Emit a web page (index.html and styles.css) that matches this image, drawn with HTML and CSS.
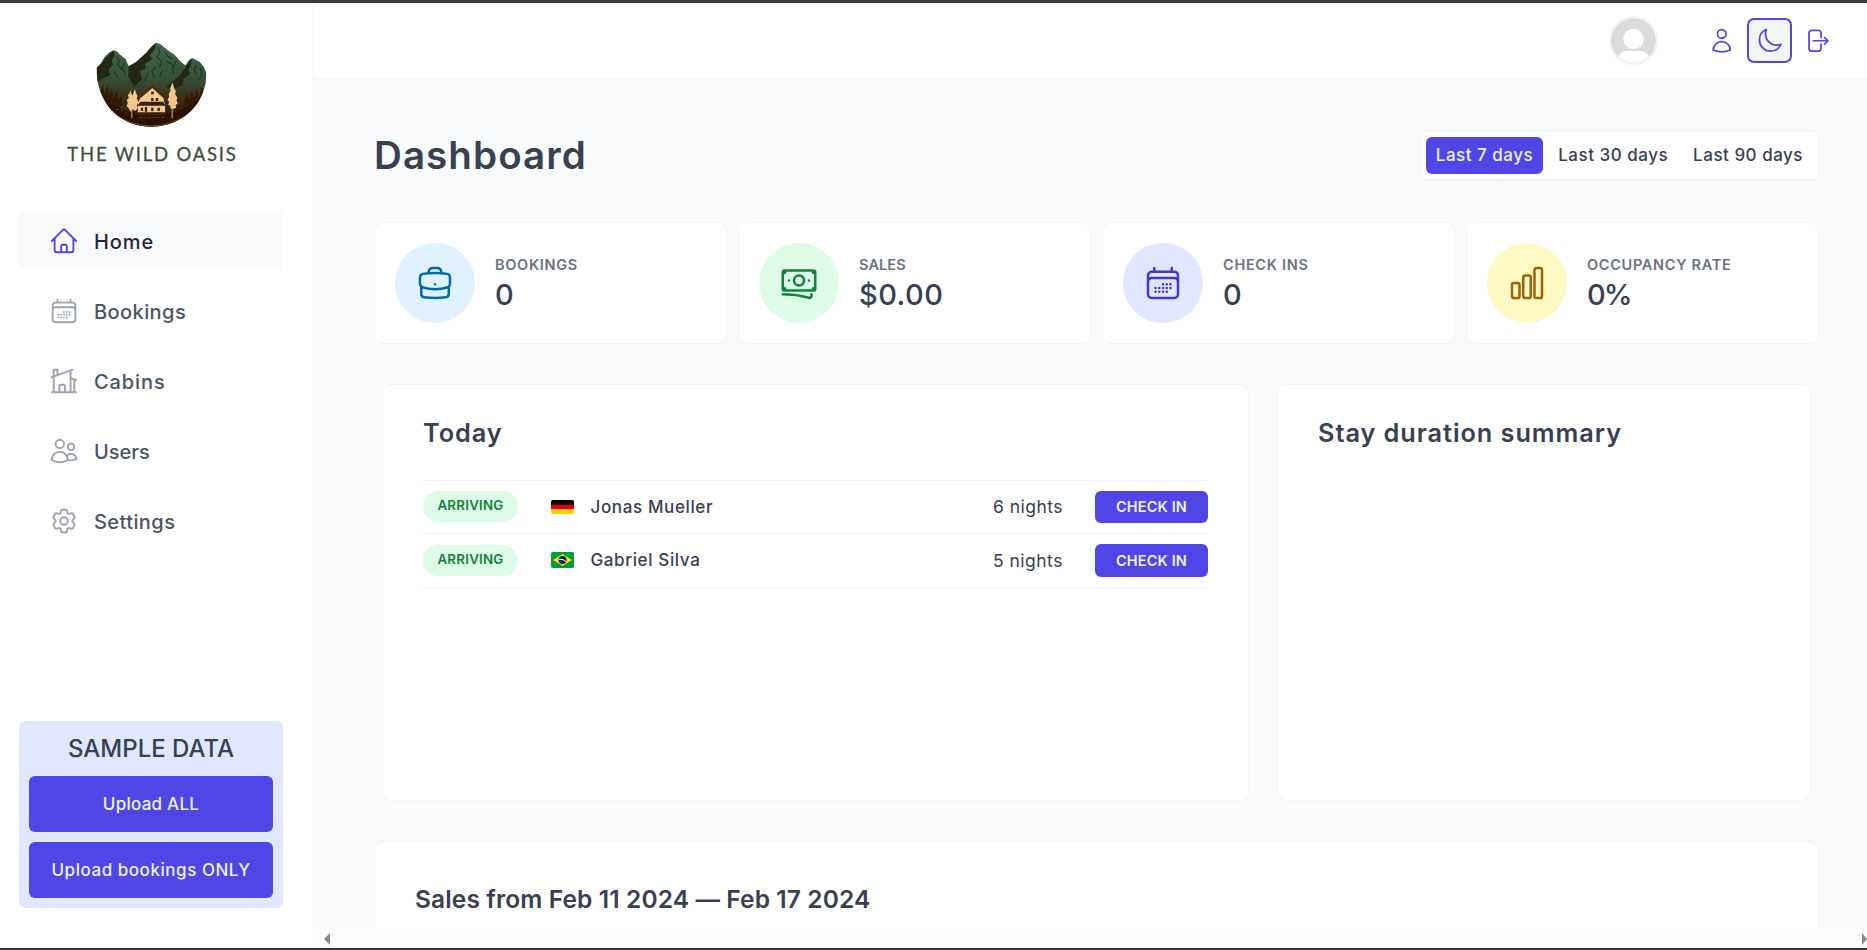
FILE: index.html
```html
<!DOCTYPE html>
<html lang="en">
<head>
<meta charset="utf-8">
<title>The Wild Oasis</title>
<link rel="stylesheet" href="styles.css">
</head>
<body>
<div class="app">
  <aside class="sidebar">
    <div class="logo">
      <svg class="logo-mark" viewBox="290 127 332 255">
        <defs>
          <linearGradient id="land" x1="0" y1="0" x2="0" y2="1">
            <stop offset="0" stop-color="#3f664c"/>
            <stop offset=".42" stop-color="#35503a"/>
            <stop offset=".66" stop-color="#3a3018"/>
            <stop offset="1" stop-color="#241003"/>
          </linearGradient>
          <clipPath id="bowl"><path d="M291 205 305 190 315 172 330 158 342 152 352 155 362 165 378 178 388 200 410 187 440 160 458 138 470 129 482 133 505 152 525 165 548 190 558 197 568 182 578 175 588 180 600 186 612 200 621 220C621 310 550 381 456 381 360 381 291 310 291 205Z"/></clipPath>
        </defs>
        <g clip-path="url(#bowl)">
          <rect x="290" y="127" width="332" height="255" fill="url(#land)"/>
          <path fill="#232813" d="M291 205 342 152 346 166 337 180 340 196 326 210 333 226 312 236 291 250ZM388 200 470 129 466 150 450 166 458 178 436 192 440 206 420 214 428 238 404 262 386 230ZM500 262 540 228 578 175 574 196 566 212 572 222 552 238 548 258 520 268Z"/>
          <path fill="none" stroke="#232813" stroke-width="3" d="M352 170l8 14-6 12 12 14M376 186l-8 20 10 16M474 142l8 16-10 14 14 12-6 18M496 156l8 14 14 6M500 186l16 6 8 14M470 200l-14 14 8 18M530 186l-12 24 6 14M488 214l-8 16M590 196l-6 16 8 14M604 204l2 24-12 16M344 214l8 18M444 222l-8 22"/>
          <path fill="#331703" d="M291 230l10 46 8-22 6 28 8-26 6 30 8-22 6 32 8-24 6 30 10-18v110H291ZM621 236l-8 48-6-24-8 30-8-26-6 30-8-22-6 30-8-20-10 26v74h68Z" opacity=".85"/>
          <path fill="#2a1203" d="M330 312Q390 345 456 347T600 300V382H300Z"/>
          <path fill="none" stroke="#8f5d30" stroke-width="2" d="M350 330q18-4 36 16M362 322q18 2 24 10M420 353h75" stroke-dasharray="9 4"/>
          <path fill="none" stroke="#7a4a2c" stroke-width="3" d="M340 340Q395 379 456 379T575 338"/>
        </g>
        <path fill="#f4c98c" d="M415 344V310L420 300V292L459 260 493 292V304L497 312V344Z"/>
        <path fill="#3a1c08" d="M413 318l10-12h68l8 12ZM415 338h83v7h-83ZM455 276h8v8h-8ZM455 295h7v9h-7ZM469 295h7v9h-7ZM424 324h7v10h-7ZM436 322h7v14h-7ZM455 324h7v10h-7ZM474 324h7v10h-7Z"/>
        <path fill="none" stroke="#4c280d" stroke-width="6" d="M415 298 459 261 495 294"/>
        <path fill="#f3c78c" d="M392 270l4 12 3 6 7-20 4 12 4 8-2 8 5 12-5 8 3 10-8 8-8-6-6 8-6-12-6-4 4-10-3-8 6-8-3-8 6-6ZM519 248l5 18 5 8-2 10 7 10-3 8 4 10-7 4 2 8-9 4-8-2-1-8-6-2 3-10-5-6 5-8-1-10 5-8-1-8Z"/>
        <path stroke="#e7b577" stroke-width="3" d="M397 325v30M518 325v30"/>
      </svg>
      <span class="logo-text">THE WILD OASIS</span>
    </div>
    <nav class="nav">
      <a class="nav-item active"><svg class="icon" viewBox="0 0 24 24"><path d="M2.25 12l8.954-8.955c.44-.439 1.152-.439 1.591 0L21.75 12M4.5 9.75v10.125c0 .621.504 1.125 1.125 1.125H9.75v-4.875c0-.621.504-1.125 1.125-1.125h2.25c.621 0 1.125.504 1.125 1.125V21h4.125c.621 0 1.125-.504 1.125-1.125V9.75M8.25 21h8.25"/></svg><span>Home</span></a>
      <a class="nav-item"><svg class="icon" viewBox="0 0 24 24"><path id="calendar" d="M6.75 3v2.25M17.25 3v2.25M3 18.75V7.5a2.25 2.25 0 012.25-2.25h13.5A2.25 2.25 0 0121 7.5v11.25m-18 0A2.25 2.25 0 005.25 21h13.5A2.25 2.25 0 0021 18.75m-18 0v-7.5A2.25 2.25 0 015.25 9h13.5A2.25 2.25 0 0121 11.25v7.5m-9-6h.008v.008H12v-.008zM12 15h.008v.008H12V15zm0 2.25h.008v.008H12v-.008zM9.75 15h.008v.008H9.75V15zm0 2.25h.008v.008H9.75v-.008zM7.5 15h.008v.008H7.5V15zm0 2.25h.008v.008H7.5v-.008zm6.75-4.5h.008v.008h-.008v-.008zm0 2.25h.008v.008h-.008V15zm0 2.25h.008v.008h-.008v-.008zm2.25-4.5h.008v.008H16.5v-.008zm0 2.25h.008v.008H16.5V15z"/></svg><span class="bookings">Bookings</span></a>
      <a class="nav-item"><svg class="icon" viewBox="0 0 24 24"><path d="M8.25 21v-4.875c0-.621.504-1.125 1.125-1.125h2.25c.621 0 1.125.504 1.125 1.125V21m0 0h4.5V3.545M12.75 21h7.5V10.75M2.25 21h1.5m18 0h-18M2.25 9l4.5-1.636M18.75 3l-1.5.545m0 6.205l3 1m1.5.5l-1.500-.5M6.75 7.364V3h-3v18m3-13.636l10.5-3.819"/></svg><span class="cabins">Cabins</span></a>
      <a class="nav-item"><svg class="icon" viewBox="0 0 24 24"><path d="M15 19.128a9.38 9.38 0 002.625.372 9.337 9.337 0 004.121-.952 4.125 4.125 0 00-7.533-2.493M15 19.128v-.003c0-1.113-.285-2.16-.786-3.07M15 19.128v.106A12.318 12.318 0 018.624 21c-2.331 0-4.512-.645-6.374-1.766l-.001-.109a6.375 6.375 0 0111.964-3.07M12 6.375a3.375 3.375 0 11-6.75 0 3.375 3.375 0 016.75 0zm8.25 2.25a2.625 2.625 0 11-5.25 0 2.625 2.625 0 015.25 0z"/></svg><span class="users">Users</span></a>
      <a class="nav-item"><svg class="icon" viewBox="0 0 24 24"><path d="M9.594 3.94c.09-.542.56-.94 1.11-.94h2.593c.55 0 1.02.398 1.11.94l.213 1.281c.063.374.313.686.645.87.074.04.147.083.22.127.324.196.72.257 1.075.124l1.217-.456a1.125 1.125 0 011.37.49l1.296 2.247a1.125 1.125 0 01-.26 1.431l-1.003.827c-.293.24-.438.613-.431.992a6.759 6.759 0 010 .255c-.007.378.138.75.43.99l1.005.828c.424.35.534.954.26 1.43l-1.298 2.247a1.125 1.125 0 01-1.369.491l-1.217-.456c-.355-.133-.75-.072-1.076.124a6.57 6.57 0 01-.22.128c-.331.183-.581.495-.644.869l-.213 1.28c-.09.543-.56.941-1.11.941h-2.594c-.55 0-1.02-.398-1.11-.94l-.213-1.281c-.062-.374-.312-.686-.644-.87a6.52 6.52 0 01-.22-.127c-.325-.196-.72-.257-1.076-.124l-1.217.456a1.125 1.125 0 01-1.369-.49l-1.297-2.247a1.125 1.125 0 01.26-1.431l1.004-.827c.292-.24.437-.613.43-.992a6.932 6.932 0 010-.255c.007-.378-.138-.75-.43-.99l-1.004-.828a1.125 1.125 0 01-.26-1.43l1.297-2.247a1.125 1.125 0 011.37-.491l1.216.456c.356.133.751.072 1.076-.124.072-.044.146-.087.22-.128.332-.183.582-.495.644-.869l.214-1.281zM15 12a3 3 0 11-6 0 3 3 0 016 0z"/></svg><span class="bookings">Settings</span></a>
    </nav>
    <section class="sample">
      <h3>SAMPLE DATA</h3>
      <button class="upload all">Upload ALL</button>
      <button class="upload">Upload bookings ONLY</button>
    </section>
  </aside>
  <div class="page">
    <header class="topbar">
      <svg class="avatar" viewBox="0 0 49 49"><circle cx="24.5" cy="24.5" r="24.5" fill="#f3f4f6"/><circle cx="24.5" cy="24.5" r="22.3" fill="#dbdbdb"/><circle cx="24.5" cy="23" r="10.2" fill="#fff"/><path fill="#fff" d="M9 40.2Q12 35 18 35H31Q37 35 40 40.2A22 22 0 0 1 9 40.2Z"/></svg>
      <div class="actions">
        <button class="tool"><svg class="icon" viewBox="0 0 24 24"><path d="M15.75 6a3.75 3.75 0 11-7.5 0 3.75 3.75 0 017.5 0zM4.501 20.118a7.5 7.5 0 0114.998 0A17.933 17.933 0 0112 21.75c-2.676 0-5.216-.584-7.499-1.632z"/></svg></button>
        <button class="tool focused"><svg class="icon" viewBox="0 0 24 24"><path d="M21.752 15.002A9.718 9.718 0 0118 15.75c-5.385 0-9.75-4.365-9.75-9.75 0-1.33.266-2.597.748-3.752A9.753 9.753 0 003 11.25C3 16.635 7.365 21 12.75 21a9.753 9.753 0 009.002-5.998z"/></svg></button>
        <button class="tool"><svg class="icon" viewBox="0 0 24 24"><path d="M15.75 9V5.25A2.25 2.25 0 0013.5 3h-6a2.25 2.25 0 00-2.25 2.25v13.5A2.25 2.25 0 007.5 21h6a2.25 2.25 0 002.25-2.25V15m3 0l3-3m0 0l-3-3m3 3H9"/></svg></button>
      </div>
    </header>
    <main class="content">
      <div class="heading">
        <h1>Dashboard</h1>
        <div class="filter">
          <button class="range selected">Last 7 days</button>
          <button class="range">Last 30 days</button>
          <button class="range">Last 90 days</button>
        </div>
      </div>
      <div class="stats">
        <div class="stat"><div class="disc blue"><svg class="icon" viewBox="0 0 24 24"><path d="M20.25 14.15v4.25c0 1.094-.787 2.036-1.872 2.18-2.087.277-4.216.42-6.378.42s-4.291-.143-6.378-.42c-1.085-.144-1.872-1.086-1.872-2.18v-4.25m16.5 0a2.18 2.18 0 00.75-1.661V8.706c0-1.081-.768-2.015-1.837-2.175a48.114 48.114 0 00-3.413-.387m4.5 8.006c-.194.165-.42.295-.673.38A23.978 23.978 0 0112 15.75c-2.648 0-5.195-.429-7.577-1.22a2.016 2.016 0 01-.673-.38m0 0A2.18 2.18 0 013 12.489V8.706c0-1.081.768-2.015 1.837-2.175a48.111 48.111 0 013.413-.387m7.5 0V5.25A2.25 2.25 0 0013.5 3h-3a2.25 2.25 0 00-2.25 2.25v.894m7.5 0a48.667 48.667 0 00-7.5 0M12 12.75h.008v.008H12v-.008z"/></svg></div><div><h5>BOOKINGS</h5><p>0</p></div></div>
        <div class="stat"><div class="disc green"><svg class="icon" viewBox="0 0 24 24"><path d="M2.25 18.75a60.07 60.07 0 0115.797 2.101c.727.198 1.453-.342 1.453-1.096V18.75M3.75 4.5v.75A.75.75 0 013 6h-.75m0 0v-.375c0-.621.504-1.125 1.125-1.125H20.25M2.25 6v9m18-10.5v.75c0 .414.336.75.75.75h.75m-1.5-1.5h.375c.621 0 1.125.504 1.125 1.125v9.75c0 .621-.504 1.125-1.125 1.125h-.375m1.5-1.5H21a.75.75 0 00-.75.75v.75m0 0H3.75m0 0h-.375a1.125 1.125 0 01-1.125-1.125V15m1.5 1.5v-.75A.75.75 0 003 15h-.75M15 10.5a3 3 0 11-6 0 3 3 0 016 0zm3 0h.008v.008H18V10.5zm-12 0h.008v.008H6V10.5z"/></svg></div><div><h5 class="snug">SALES</h5><p class="money">$0.00</p></div></div>
        <div class="stat"><div class="disc indigo"><svg class="icon" viewBox="0 0 24 24"><use href="#calendar"/></svg></div><div><h5>CHECK INS</h5><p>0</p></div></div>
        <div class="stat"><div class="disc yellow"><svg class="icon" viewBox="0 0 24 24"><path d="M3 13.125C3 12.504 3.504 12 4.125 12h2.25c.621 0 1.125.504 1.125 1.125v6.75C7.5 20.496 6.996 21 6.375 21h-2.25A1.125 1.125 0 013 19.875v-6.75zM9.75 8.625c0-.621.504-1.125 1.125-1.125h2.25c.621 0 1.125.504 1.125 1.125v11.25c0 .621-.504 1.125-1.125 1.125h-2.25a1.125 1.125 0 01-1.125-1.125V8.625zM16.5 4.125c0-.621.504-1.125 1.125-1.125h2.25C20.496 3 21 3.504 21 4.125v15.75c0 .621-.504 1.125-1.125 1.125h-2.25a1.125 1.125 0 01-1.125-1.125V4.125z"/></svg></div><div><h5>OCCUPANCY RATE</h5><p class="percent">0%</p></div></div>
      </div>
      <div class="panels">
        <section class="card today">
          <h2>Today</h2>
          <ul>
            <li><span class="tag">ARRIVING</span>
              <svg class="flag" viewBox="0 0 23 14"><path d="M0 0h23v5H0z"/><path fill="#d00" d="M0 4.700h23v4.800H0z"/><path fill="#ffce00" d="M0 9.300h23V14H0z"/></svg>
              <span class="guest">Jonas Mueller</span><span class="nights">6 nights</span><button class="checkin">CHECK IN</button></li>
            <li><span class="tag">ARRIVING</span>
              <svg class="flag" viewBox="0 0 23 16"><path fill="#009b3a" d="M0 0h23v16H0z"/><path fill="#fedf00" d="M2 8l9.500-6L21 8l-9.500 6z"/><circle cx="11.500" cy="8" r="4" fill="#002776"/><path fill="none" stroke="#fff" d="M8 7.200q4.500-.5 7 2.500"/></svg>
              <span class="guest">Gabriel Silva</span><span class="nights">5 nights</span><button class="checkin">CHECK IN</button></li>
          </ul>
        </section>
        <section class="card stay"><h2>Stay duration summary</h2></section>
      </div>
      <section class="card sales"><h2>Sales from Feb 11 2024 — Feb 17 2024</h2></section>
    </main>
    <div class="hscroll"><i class="left"></i><i class="right"></i></div>
  </div>
</div>
</body>
</html>
```
FILE: styles.css
```css
* { box-sizing: border-box; margin: 0; padding: 0; }
body { font-family: Inter, "Open Sans", sans-serif; font-size: 17px; line-height: 1.6; color: #374151; background: #fff; }
button { font: inherit; letter-spacing: inherit; border: 0; color: inherit; }
.app { width: 1867px; height: 950px; display: grid; grid-template-columns: 314px 1fr; border-top: 3px solid #3b3b3b; border-bottom: 2px solid #353334; overflow: hidden; }
.icon { display: block; fill: none; stroke: currentColor; stroke-width: 1.5; stroke-linecap: round; stroke-linejoin: round; }

.sidebar { display: flex; flex-direction: column; border-right: 1px solid #f3f4f6; padding: 39px 30px 40px 19px; }
.logo { display: flex; flex-direction: column; align-items: center; height: 169px; }
.logo-mark { width: 111px; height: 85px; margin-left: 1px; }
.logo-text { margin-top: 13px; padding-left: 3px; font-family: Lato, sans-serif; font-size: 18.500px; line-height: 28px; letter-spacing: 1.8px; color: #3c5135; -webkit-text-stroke: .3px #3c5135; white-space: nowrap; }
.nav { display: grid; gap: 10px; }
.nav-item { height: 60px; padding: 0 30px; display: flex; align-items: center; gap: 15px; border-radius: 6px; font-size: 20px; font-weight: 500; letter-spacing: .9px; color: #4b5563; }
.nav-item span { padding-top: 1px; }
.bookings { letter-spacing: .42px; }
.users { letter-spacing: 0; }
.nav-item .icon { width: 30px; height: 30px; color: #9ca3af; }
.nav-item.active { background: #f9fafb; color: #1f2937; }
.nav-item.active .icon { color: #4f46e5; }
.sample { margin-top: auto; height: 187px; background: #e0e7ff; border-radius: 6px; padding: 10px; display: flex; flex-direction: column; gap: 10px; align-items: center; }
.sample h3 { font-size: 24px; font-weight: 500; line-height: 35px; white-space: nowrap; }
.upload { width: 100%; height: 56px; padding-top: 1px; border-radius: 6px; background: #4f46e5; color: #eef2ff; font-weight: 500; letter-spacing: .54px; }
.upload.all { letter-spacing: .25px; }

.page { display: grid; grid-template-rows: 76px 1fr 19px; min-width: 0; min-height: 0; }
.topbar { display: flex; justify-content: flex-end; align-items: center; gap: 43px; padding-right: 29px; border-bottom: 1px solid #f3f4f6; }
.avatar { width: 49px; height: 49px; }
.actions { display: flex; gap: 5px; }
.tool { width: 42.500px; height: 42.500px; padding: 7.500px; background: none; color: #4f46e5; border-radius: 6px; }
.tool .icon { width: 27.500px; height: 27.500px; }
.tool.focused { background: #f3f4f6; outline: 2px solid #4f46e5; outline-offset: -1px; }

.content { background: #f9fafb; padding: 50px 48px 0 60px; display: flex; flex-direction: column; gap: 40px; overflow: hidden; min-height: 0; }
.content > * { flex: none; }
.heading { height: 52.500px; display: flex; justify-content: space-between; align-items: center; }
h1 { font-size: 38.500px; line-height: 52px; font-weight: 600; letter-spacing: 1.1px; }
.filter { display: flex; gap: 5px; padding: 5px; background: #fff; border: 1px solid #f3f4f6; border-radius: 6px; box-shadow: 0 1px 2px rgba(0,0,0,.04); }
.range { height: 37px; padding: 0 10px; border-radius: 6px; background: none; font-weight: 500; letter-spacing: .51px; white-space: nowrap; }
.range.selected { background: #4f46e5; color: #eef2ff; }

.stats { display: grid; grid-template-columns: repeat(4, 1fr); gap: 11.500px; padding-right: .5px; }
.stat { height: 122px; padding: 20px; display: flex; align-items: center; gap: 20px; background: #fff; border: 1px solid #f3f4f6; border-radius: 9px; }
.disc { width: 80px; height: 80px; border-radius: 50%; display: grid; place-items: center; }
.disc .icon { width: 40px; height: 40px; }
.blue { background: #e0f2fe; color: #0369a1; }
.green { background: #dcfce7; color: #15803d; }
.indigo { background: #e0e7ff; color: #4338ca; }
.yellow { background: #fef9c3; color: #a16207; }
.stat h5 { font-size: 14.500px; line-height: 24px; font-weight: 600; letter-spacing: .7px; color: #6b7280; }
.stat .snug { letter-spacing: .1px; }
.stat p { font-size: 29px; line-height: 36px; font-weight: 500; }
.stat .money { letter-spacing: .47px; }
.stat .percent { letter-spacing: -2px; }

.panels { display: grid; grid-template-columns: 867px 534px; gap: 28px; padding-left: 8px; height: 417.500px; }
.card { background: #fff; border: 1px solid #f3f4f6; border-radius: 9px; padding: 30px 40px; }
h2 { font-size: 25.300px; line-height: 35px; font-weight: 600; letter-spacing: .95px; white-space: nowrap; }
.today ul { list-style: none; margin-top: 30px; border-top: 1px solid #f3f4f6; }
.today li { height: 53.500px; display: grid; grid-template-columns: 112.500px 25px 1fr 87px 113px; gap: 15px; align-items: center; border-bottom: 1px solid #f3f4f6; }
.tag { justify-self: start; width: 95px; height: 31px; border-radius: 31px; background: #dcfce7; color: #15803d; font-size: 13.300px; line-height: 29px; font-weight: 600; letter-spacing: .25px; text-align: center; }
.flag { width: 23px; border-radius: 2px; }
.guest { font-weight: 500; letter-spacing: .63px; padding-top: 1px; }
.nights { font-size: 17.500px; letter-spacing: .48px; padding-top: 1px; }
.checkin { height: 32.500px; border-radius: 6px; background: #4f46e5; color: #eef2ff; font-size: 14.500px; font-weight: 600; letter-spacing: .15px; }
.sales { height: 300px; padding-top: 40px; }
.sales h2 { font-size: 24.500px; letter-spacing: .12px; }

.hscroll { background: #fcfcfc; display: flex; justify-content: space-between; align-items: center; padding-left: 10px; }
.hscroll i { border: 6px solid transparent; border-left-width: 0; border-right: 6px solid #8b8b8b; }
.hscroll .right { border-right-width: 0; border-left: 5px solid #8b8b8b; }
```
